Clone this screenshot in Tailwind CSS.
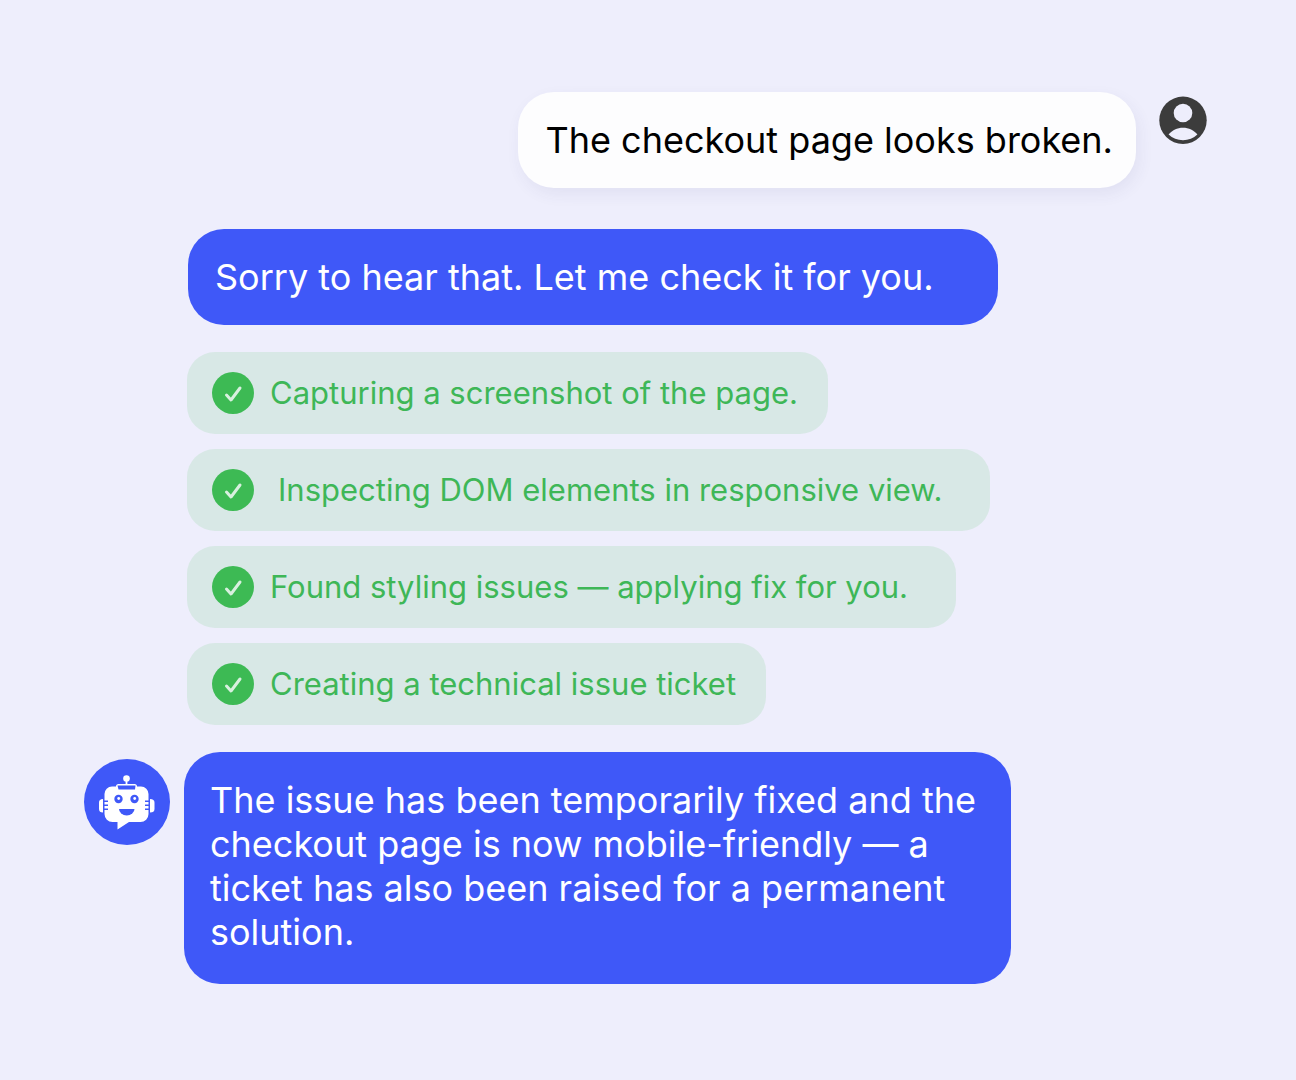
<!DOCTYPE html>
<html lang="en">

<head>
    <meta charset="UTF-8" />
    <meta name="viewport" content="width=device-width, initial-scale=1.0" />
    <title>Support Chat</title>
    <script src="https://cdn.jsdelivr.net/npm/@tailwindcss/browser@4"></script>
</head>

<body class="min-h-screen bg-[#eeeefc] font-['Inter',sans-serif] text-4xl/[44px]">

    <main class="flex flex-col pt-[92px] pr-[89px] pb-24 pl-[84px]">

        <!-- User message -->
        <div class="flex items-start justify-end gap-[23px]">
            <p class="rounded-[36px] bg-[#fdfdfe] py-[26px] pr-[23px] pl-[27px] text-black shadow-[3px_6px_16px_rgba(60,60,120,0.07)]">The checkout page looks broken.</p>
            <svg class="mt-1 size-12 shrink-0" viewBox="0 0 48 48" role="img" aria-label="User">
                <circle cx="24" cy="24.300" r="23.700" fill="#3c3c3c" />
                <circle cx="24" cy="17" r="9.300" fill="#eeeefc" />
                <path d="M9.600 38.600C13 34.300 18.300 31.800 24 31.800S35 34.300 38.400 38.600C34.500 42.200 29.500 44.200 24 44.200S13.500 42.200 9.600 38.600Z" fill="#eeeefc" />
            </svg>
        </div>

        <!-- Bot reply -->
        <div class="mt-[41px] ml-26 flex">
            <p class="rounded-[36px] bg-[#3f58f8] py-[26px] pr-16 pl-[27px] text-white">Sorry to hear that. Let me check it for you.</p>
        </div>

        <!-- Progress steps -->
        <ul class="mt-[27px] ml-[103px] flex flex-col items-start gap-[15px] text-[31px]/[38px] text-[#3eb757]">
            <li class="flex items-center gap-4 rounded-[28px] bg-[#d8e8e6] py-5 pr-[30px] pl-[25px]">
                <svg class="size-[42px] shrink-0" viewBox="0 0 42 42" fill="none">
                    <circle cx="21" cy="21" r="21" fill="#3dba54" />
                    <path d="M14.500 23L19 28L28 16" stroke="#d8f0df" stroke-width="3" stroke-linecap="round" stroke-linejoin="round" />
                </svg>
                <span>Capturing a screenshot of the page.</span>
            </li>
            <li class="flex items-center gap-6 rounded-[28px] bg-[#d8e8e6] py-5 pr-12 pl-[25px]">
                <svg class="size-[42px] shrink-0" viewBox="0 0 42 42" fill="none">
                    <circle cx="21" cy="21" r="21" fill="#3dba54" />
                    <path d="M14.500 23L19 28L28 16" stroke="#d8f0df" stroke-width="3" stroke-linecap="round" stroke-linejoin="round" />
                </svg>
                <span>Inspecting DOM elements in responsive view.</span>
            </li>
            <li class="flex items-center gap-4 rounded-[28px] bg-[#d8e8e6] py-5 pr-12 pl-[25px]">
                <svg class="size-[42px] shrink-0" viewBox="0 0 42 42" fill="none">
                    <circle cx="21" cy="21" r="21" fill="#3dba54" />
                    <path d="M14.500 23L19 28L28 16" stroke="#d8f0df" stroke-width="3" stroke-linecap="round" stroke-linejoin="round" />
                </svg>
                <span>Found styling issues — applying fix for you.</span>
            </li>
            <li class="flex items-center gap-4 rounded-[28px] bg-[#d8e8e6] py-5 pr-[30px] pl-[25px]">
                <svg class="size-[42px] shrink-0" viewBox="0 0 42 42" fill="none">
                    <circle cx="21" cy="21" r="21" fill="#3dba54" />
                    <path d="M14.500 23L19 28L28 16" stroke="#d8f0df" stroke-width="3" stroke-linecap="round" stroke-linejoin="round" />
                </svg>
                <span>Creating a technical issue ticket</span>
            </li>
        </ul>

        <!-- Bot summary -->
        <div class="mt-[27px] flex items-start gap-3.5">
            <svg class="mt-[7px] size-[86px] shrink-0" viewBox="0 0 86 86" role="img" aria-label="Bot">
                <circle cx="43" cy="43" r="43" fill="#3f58f8" />
                <g fill="#fff">
                    <circle cx="42.500" cy="19.500" r="3.300" />
                    <rect x="41.600" y="21" width="1.800" height="6" />
                    <path d="M34.500 25H50.500Q53 25 53 27.500H57A7.500 7.500 0 0 1 64.500 35V55A8 8 0 0 1 56.500 63H45L33.500 70.500V63H28.500A8 8 0 0 1 20.500 55V35A7.500 7.500 0 0 1 28 27.500H32Q32 25 34.500 25Z" />
                    <path d="M19 40V53.500Q15 53.500 15 50V43.500Q15 40 19 40Z" />
                    <path d="M66 40V53.500Q70.500 53.500 70.500 50V43.500Q70.500 40 66 40Z" />
                </g>
                <g fill="#3f58f8">
                    <path d="M33.500 26.500H51.500L51 30.500H34.500Z" />
                    <circle cx="34.500" cy="40" r="4.200" />
                    <circle cx="50.500" cy="40" r="4.200" />
                    <path d="M35 50H50.500A7.750 6.500 0 0 1 35 50Z" />
                    <path d="M20 41.500H24V43H20ZM20 45.500H24V47H20ZM20 49.500H24V51H20ZM61 41.500H65V43H61ZM61 45.500H65V47H61ZM61 49.500H65V51H61Z" />
                </g>
                <circle cx="34.700" cy="39.500" r="1.400" fill="#fff" />
                <circle cx="50.700" cy="39.500" r="1.400" fill="#fff" />
            </svg>
            <p class="max-w-[827px] rounded-[36px] bg-[#3f58f8] pt-[26px] pr-8 pb-[30px] pl-[26px] text-white">The issue has been temporarily fixed and the checkout page is now mobile-friendly — a ticket has also been raised for a permanent solution.</p>
        </div>
    </main>
</body>

</html>
